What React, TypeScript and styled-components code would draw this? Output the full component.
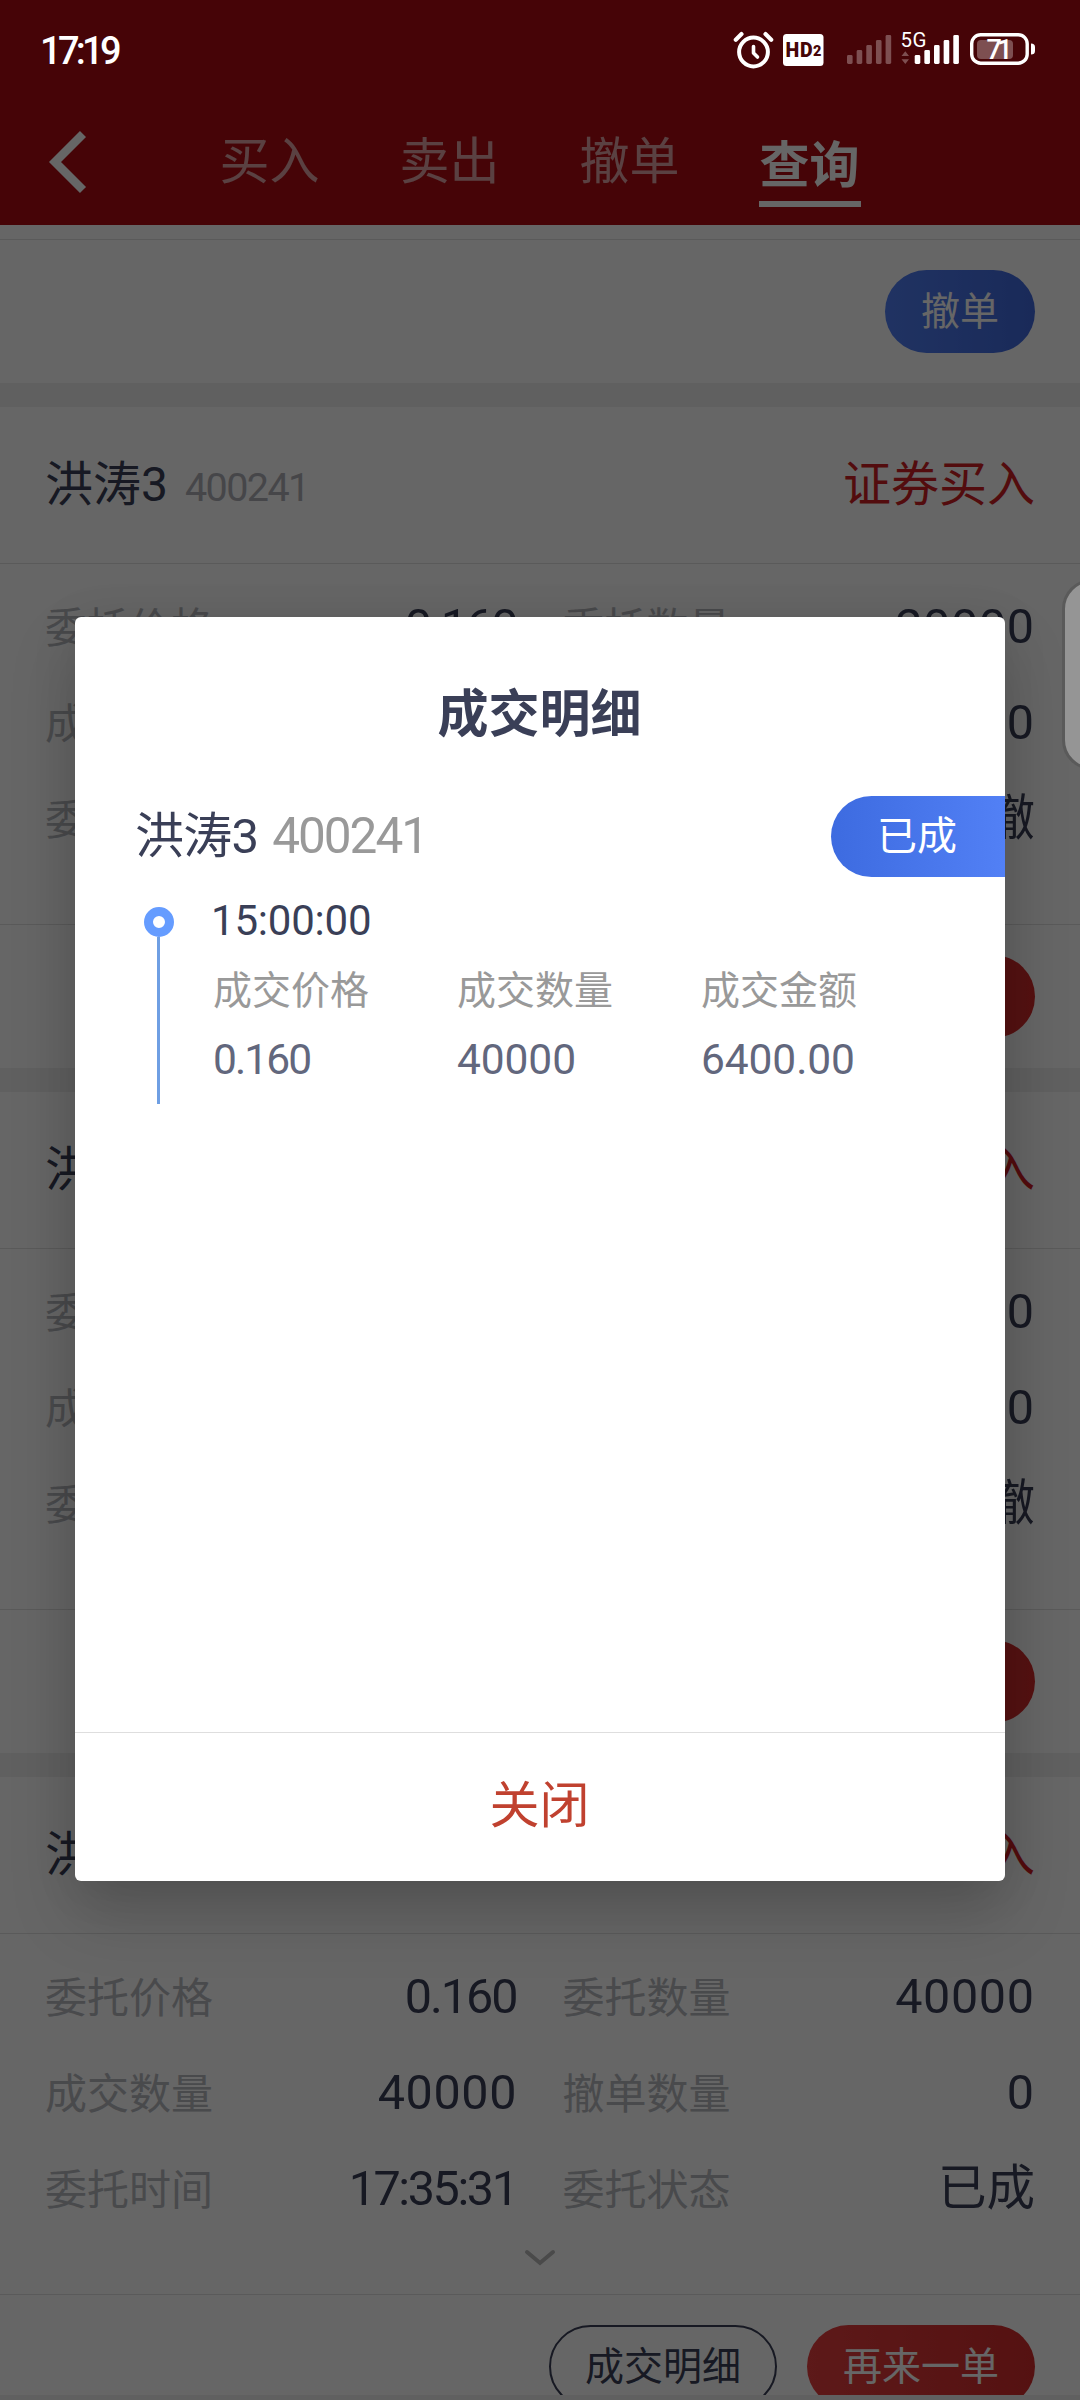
import React from "react";
import styled, { createGlobalStyle } from "styled-components";

const Global = createGlobalStyle`
  * { box-sizing: border-box; }
  body { margin: 0; background: #fff; }
  button { font: inherit; margin: 0; padding: 0; border: 0; background: none; }
`;

const ink = "#3a3f57";
const muted = "#b6b8be";
const hairline = "#e0e0e0";

const Screen = styled.div`
  position: relative;
  width: 1080px;
  height: 2400px;
  overflow: hidden;
  display: flex;
  flex-direction: column;
  background: #f1f1f1;
  font-family: Roboto, "Noto Sans CJK SC", sans-serif;
  color: ${ink};
  white-space: nowrap;
`;

const TopBar = styled.header`
  flex: none;
  height: 225px;
  background: #af0c13;
`;

const StatusBar = styled.div`
  position: relative;
  z-index: 3;
  height: 100px;
  padding: 2px 45px 0 40px;
  display: flex;
  justify-content: space-between;
  align-items: center;
  color: #fff;
`;

const Clock = styled.span`
  font-size: 38px;
  font-weight: 500;
  line-height: 44px;
  letter-spacing: -3.7px;
`;

const StatusIcons = styled.svg`
  display: block;
  width: 305px;
  height: 48px;
  font-family: Roboto, sans-serif;
`;

const Nav = styled.nav`
  height: 125px;
  display: flex;
  align-items: flex-start;
  padding: 24px 0 0 45px;
`;

const BackIcon = styled.svg`
  width: 50px;
  height: 76px;
  margin-right: 124px;
`;

const Tabs = styled.div`
  display: flex;
  gap: 78px;
`;

const Tab = styled.button<{ $active?: boolean }>`
  width: 102px;
  height: ${(p) => (p.$active ? 83 : 74)}px;
  padding-top: ${(p) => (p.$active ? 6 : 2)}px;
  font-size: 50px;
  line-height: 66px;
  text-align: center;
  text-indent: -1px;
  font-weight: ${(p) => (p.$active ? 700 : 400)};
  color: ${(p) => (p.$active ? "#fff" : "rgba(255,255,255,.62)")};
  border-bottom: ${(p) => (p.$active ? "6px solid #fff" : "0")};
`;

const List = styled.main`
  height: 2170px;
  overflow: hidden;
  display: flex;
  flex-direction: column;
  gap: 24px;
`;

const Card = styled.section`
  flex: none;
  background: #fff;
`;

const CardHead = styled.div`
  height: 156px;
  padding: 0 45px 11px;
  display: flex;
  align-items: center;
  justify-content: space-between;
`;

const Stock = styled.div`
  display: flex;
  align-items: baseline;
  font-size: 48px;
`;

const Code = styled.span`
  margin-left: 17px;
  font-size: 39.5px;
  letter-spacing: -1.6px;
  color: #aeb0b6;
`;

const Side = styled.span`
  font-size: 48px;
  color: #cf1f24;
`;

const CardBody = styled.div`
  height: 362px;
  border-top: 1px solid ${hairline};
  border-bottom: 1px solid ${hairline};
  padding: 15px 45px 0;
`;

const Grid = styled.div`
  display: grid;
  grid-template-columns: 1fr 1fr;
  column-gap: 45px;
  grid-auto-rows: 96px;
`;

const Field = styled.div`
  display: flex;
  align-items: center;
  justify-content: space-between;
`;

const Label = styled.span`
  font-size: 42px;
  padding-bottom: 6px;
  color: ${muted};
`;

const Value = styled.span<{ $track: number }>`
  font-size: 48.5px;
  line-height: 60px;
  letter-spacing: ${(p) => p.$track}px;
  margin-right: ${(p) => (p.$track > 0 ? 0.5 : p.$track < 0 ? 1 : 0)}px;
`;

const Expand = styled.svg`
  display: block;
  width: 36px;
  height: 22px;
  margin: 10px auto 0;
`;

const CardFoot = styled.div`
  height: 143px;
  padding: 0 45px;
  display: flex;
  align-items: center;
  justify-content: flex-end;
  gap: 30px;
`;

const Pill = styled.button<{ $kind: "blue" | "red" | "line"; $wide?: boolean }>`
  width: ${(p) => (p.$wide ? 228 : 150)}px;
  height: 83px;
  border-radius: 42px;
  padding-bottom: 7px;
  font-size: 39px;
  color: ${(p) => (p.$kind === "line" ? ink : "#fff")};
  border: ${(p) => (p.$kind === "line" ? `2px solid ${ink}` : "0")};
  background: ${(p) =>
    p.$kind === "blue"
      ? "linear-gradient(90deg, #517ff5, #4069de)"
      : p.$kind === "red"
      ? "linear-gradient(90deg, #e83f3f, #d42c2c)"
      : "transparent"};
`;

const EdgeHandle = styled.div`
  position: absolute;
  z-index: 4;
  left: 1062px;
  top: 579px;
  width: 60px;
  height: 191px;
  border: 3px solid #5a5a5a;
  border-radius: 32px;
  background: #959595;
`;

const Overlay = styled.div`
  position: absolute;
  z-index: 2;
  inset: 0;
  padding-top: 617px;
  background: rgba(0, 0, 0, 0.6);
`;

const Dialog = styled.div`
  width: 930px;
  height: 1264px;
  margin: 0 auto;
  display: flex;
  flex-direction: column;
  overflow: hidden;
  border-radius: 6px;
  background: #fff;
  box-shadow: 0 33px 66px rgba(0, 0, 0, 0.17), 0 6px 48px rgba(0, 0, 0, 0.09);
`;

const Title = styled.h2`
  margin: 0;
  height: 179px;
  padding-top: 60px;
  text-align: center;
  text-indent: -1px;
  font-size: 51px;
  line-height: 76px;
  font-weight: 700;
`;

const DialogHead = styled.div`
  height: 81px;
  padding-left: 60px;
  display: flex;
  align-items: center;
  justify-content: space-between;
`;

const DialogStock = styled(Stock)`
  font-size: 49px;
  letter-spacing: -0.8px;
  padding-bottom: 11px;
`;

const DialogCode = styled(Code)`
  margin-left: 14px;
  font-size: 49.5px;
  letter-spacing: -2px;
  color: #999;
`;

const Tag = styled.div`
  width: 174px;
  height: 81px;
  padding: 10px 0 0 46px;
  border-radius: 41px 0 0 41px;
  background: linear-gradient(90deg, #3d6be0, #5280f5);
  color: #fff;
  font-size: 40px;
  line-height: 62px;
`;

const Timeline = styled.div`
  flex: 1;
  display: flex;
  padding-left: 69px;
`;

const Rail = styled.div`
  width: 30px;
  padding-top: 30px;
  display: flex;
  flex-direction: column;
  align-items: center;
`;

const Dot = styled.div`
  width: 30px;
  height: 30px;
  border: 9px solid #659cff;
  border-radius: 50%;
  background: #fff;
`;

const Stem = styled.div`
  width: 3px;
  height: 167px;
  margin-right: 1px;
  background: #6f9fe3;
`;

const Fill = styled.div`
  padding: 15px 0 0 39px;
`;

const Time = styled.div`
  font-size: 42px;
  line-height: 50px;
  height: 60px;
  padding-top: 4px;
  margin-left: -2px;
  letter-spacing: -0.2px;
`;

const Columns = styled.div`
  display: grid;
  grid-template-columns: repeat(3, 244px);
  grid-template-rows: 70px 75px;
  align-items: center;
`;

const ColLabel = styled.span`
  font-size: 39px;
  color: #999;
`;

const ColValue = styled.span<{ $track?: number }>`
  font-size: 42.5px;
  color: #62677d;
  letter-spacing: ${(p) => p.$track ?? -0.1}px;
`;

const Close = styled.button`
  height: 149px;
  padding-bottom: 13px;
  border-top: 1px solid #dedede;
  color: #c0412f;
  font-size: 50px;
  text-indent: -1px;
`;

interface Cell {
  label: string;
  value: string;
}

interface Order {
  name: string;
  code: string;
  side: string;
  cells: Cell[];
}

const makeOrder = (price: string, qty: string, done: string, undone: string, time: string, state: string): Order => ({
  name: "洪涛3",
  code: "400241",
  side: "证券买入",
  cells: [
    { label: "委托价格", value: price },
    { label: "委托数量", value: qty },
    { label: "成交数量", value: done },
    { label: "撤单数量", value: undone },
    { label: "委托时间", value: time },
    { label: "委托状态", value: state },
  ],
});

const orders: Order[] = [
  makeOrder("0.160", "20000", "0", "20000", "17:35:31", "已撤"),
  makeOrder("0.160", "20000", "0", "20000", "17:35:31", "已撤"),
  makeOrder("0.160", "40000", "40000", "0", "17:35:31", "已成"),
];

const trackFor = (text: string) => (text.includes(":") ? -2.4 : text.includes(".") ? -2 : /\d/.test(text) ? 0.6 : 0);

const bars = [0, 1, 2, 3, 4];

function Signal({ x, opacity }: { x: number; opacity: number }) {
  return (
    <g fill="#fff" fillOpacity={opacity}>
      {bars.map((i) => (
        <rect key={i} x={x + i * 9.65} y={28 - i * 5} width={5.6} height={9 + i * 5} rx={1.4} />
      ))}
    </g>
  );
}

function OrderCard({ order }: { order: Order }) {
  return (
    <Card>
      <CardHead>
        <Stock>
          {order.name}
          <Code>{order.code}</Code>
        </Stock>
        <Side>{order.side}</Side>
      </CardHead>
      <CardBody>
        <Grid>
          {order.cells.map((c) => (
            <Field key={c.label}>
              <Label>{c.label}</Label>
              <Value $track={trackFor(c.value)}>{c.value}</Value>
            </Field>
          ))}
        </Grid>
        <Expand viewBox="0 0 36 22" fill="none" stroke="#b8b8b8" strokeWidth={4} strokeLinecap="round">
          <path d="M5 5 L18 16 L31 5" />
        </Expand>
      </CardBody>
      <CardFoot>
        <Pill $kind="line" $wide>成交明细</Pill>
        <Pill $kind="red" $wide>再来一单</Pill>
      </CardFoot>
    </Card>
  );
}

const FirstCard = styled(Card)`
  padding-top: 14px;
`;

const FirstFoot = styled(CardFoot)`
  height: 144px;
  padding-bottom: 1px;
  border-top: 1px solid ${hairline};
`;

export default function App() {
  return (
    <Screen>
      <Global />
      <TopBar>
        <StatusBar>
          <Clock>17:19</Clock>
          <StatusIcons viewBox="0 0 305 48">
            <g fill="none" stroke="#fff" strokeLinecap="round" strokeLinejoin="round">
              <circle cx={23.5} cy={25} r={14.4} strokeWidth={4} />
              <path d="M23.5 19.5 V26 L27.5 30" strokeWidth={3.6} />
              <path d="M5.8 12.7 L11.5 7.1 M41.2 12.7 L35.5 7.1" strokeWidth={4.2} />
            </g>
            <rect x={53} y={7} width={40.5} height={32} rx={3.5} fill="#fff" />
            <text x={55.5} y={30} fontSize={19.5} fontWeight={900} fill="#460507" textLength={27}>HD</text>
            <text x={83} y={29} fontSize={14.5} fontWeight={900} fill="#460507">2</text>
            <Signal x={117} opacity={0.3} />
            <text x={170.5} y={20} fontSize={20.5} fill="#fff" textLength={26}>5G</text>
            <path d="M171.5 29 L175.3 24.2 L179 29 Z M171.5 32.2 L175.3 37 L179 32.2 Z" fill="#fff" fillOpacity={0.3} />
            <Signal x={184.7} opacity={1} />
            <rect x={241.7} y={7.7} width={55.5} height={28.5} rx={9} fill="none" stroke="#fff" strokeWidth={3.4} />
            <rect x={247} y={13} width={36} height={19} rx={4} fill="#fff" fillOpacity={0.3} />
            <path d="M301 16.5 q4 0 4 3.5 v4 q0 3.5 -4 3.5 z" fill="#fff" />
            <text x={256.5} y={32} fontSize={27} fontWeight={500} fill="#fff" textLength={26}>71</text>
          </StatusIcons>
        </StatusBar>
        <Nav>
          <BackIcon viewBox="0 0 50 76" fill="none" stroke="#fff" strokeWidth={8.5}>
            <path d="M38 10 L10 38 L38 66" />
          </BackIcon>
          <Tabs>
            <Tab>买入</Tab>
            <Tab>卖出</Tab>
            <Tab>撤单</Tab>
            <Tab $active>查询</Tab>
          </Tabs>
        </Nav>
      </TopBar>

      <List>
        <FirstCard>
          <FirstFoot>
            <Pill $kind="blue">撤单</Pill>
          </FirstFoot>
        </FirstCard>
        {orders.map((o, i) => (
          <OrderCard key={i} order={o} />
        ))}
      </List>

      <Overlay>
        <Dialog role="dialog">
          <Title>成交明细</Title>
          <DialogHead>
            <DialogStock>
              洪涛3
              <DialogCode>400241</DialogCode>
            </DialogStock>
            <Tag>已成</Tag>
          </DialogHead>
          <Timeline>
            <Rail>
              <Dot />
              <Stem />
            </Rail>
            <Fill>
              <Time>15:00:00</Time>
              <Columns>
                <ColLabel>成交价格</ColLabel>
                <ColLabel>成交数量</ColLabel>
                <ColLabel>成交金额</ColLabel>
                <ColValue $track={-1.9}>0.160</ColValue>
                <ColValue>40000</ColValue>
                <ColValue>6400.00</ColValue>
              </Columns>
            </Fill>
          </Timeline>
          <Close>关闭</Close>
        </Dialog>
      </Overlay>
      <EdgeHandle />
    </Screen>
  );
}
